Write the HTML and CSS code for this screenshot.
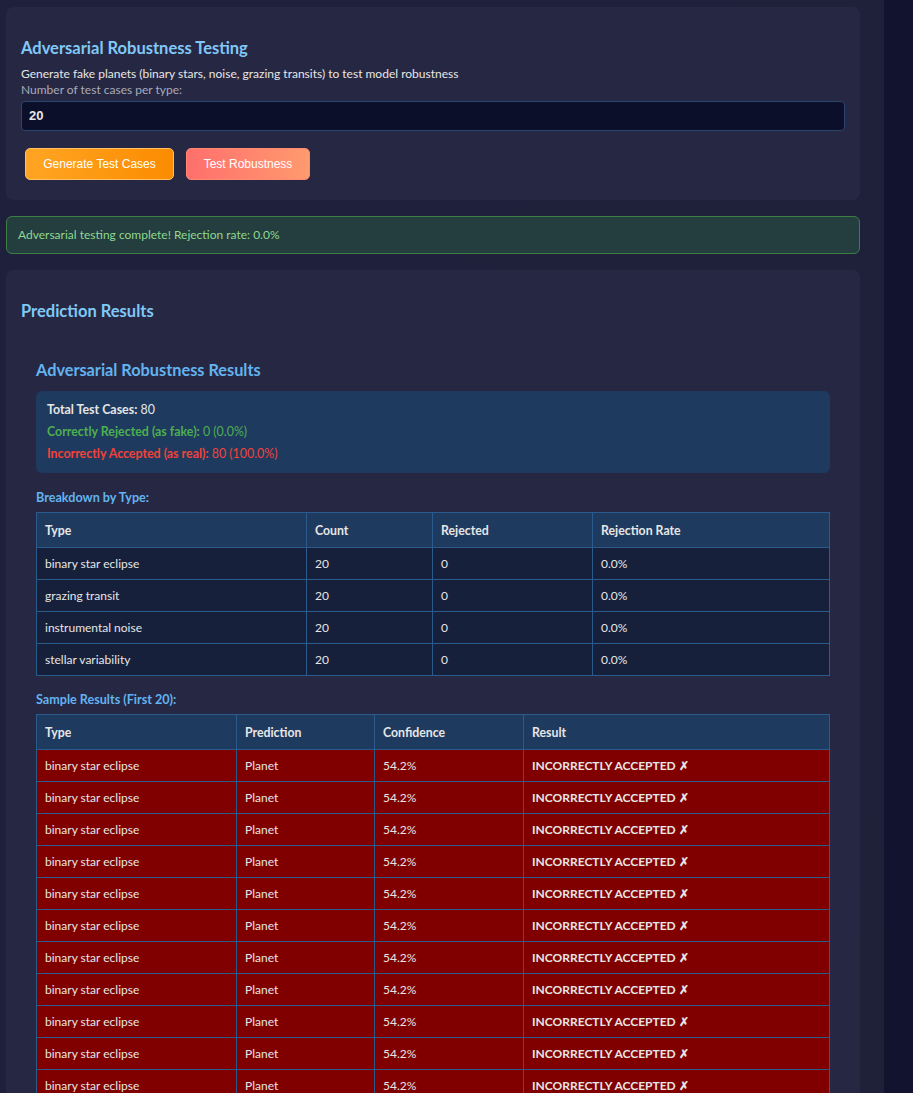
FILE: index.html
```html
<!DOCTYPE html>
<html>
<head>
<meta charset="utf-8">
<link rel="stylesheet" href="styles.css">
</head>
<body>
<div class="layout">
  <main class="main">
    <section class="card">
      <h3 class="card-title">Adversarial Robustness Testing</h3>
      <p class="desc">Generate fake planets (binary stars, noise, grazing transits) to test model robustness</p>
      <label class="label">Number of test cases per type:</label>
      <div class="input">20</div>
      <div class="actions">
        <button class="btn btn-orange">Generate Test Cases</button>
        <button class="btn btn-salmon">Test Robustness</button>
      </div>
    </section>

    <div class="alert">Adversarial testing complete! Rejection rate: 0.0%</div>

    <section class="card card-results">
      <h3 class="card-title">Prediction Results</h3>
      <div class="results">
        <h4 class="results-title">Adversarial Robustness Results</h4>
        <div class="summary">
          <p class="sum-line"><strong>Total Test Cases:</strong> 80</p>
          <p class="sum-line good"><strong>Correctly Rejected (as fake):</strong> 0 (0.0%)</p>
          <p class="sum-line bad"><strong>Incorrectly Accepted (as real):</strong> 80 (100.0%)</p>
        </div>

        <h5 class="sub-title">Breakdown by Type:</h5>
        <table class="tbl tbl-breakdown">
          <thead>
            <tr><th class="c1">Type</th><th class="c2">Count</th><th class="c3">Rejected</th><th>Rejection Rate</th></tr>
          </thead>
          <tbody>
            <tr><td>binary star eclipse</td><td>20</td><td>0</td><td>0.0%</td></tr>
            <tr><td>grazing transit</td><td>20</td><td>0</td><td>0.0%</td></tr>
            <tr><td>instrumental noise</td><td>20</td><td>0</td><td>0.0%</td></tr>
            <tr><td>stellar variability</td><td>20</td><td>0</td><td>0.0%</td></tr>
          </tbody>
        </table>

        <h5 class="sub-title sub-title-samples">Sample Results (First 20):</h5>
        <table class="tbl tbl-samples">
          <thead>
            <tr><th class="s1">Type</th><th class="s2">Prediction</th><th class="s3">Confidence</th><th>Result</th></tr>
          </thead>
          <tbody>
            <tr class="fail"><td>binary star eclipse</td><td>Planet</td><td>54.2%</td><td class="res">INCORRECTLY ACCEPTED ✗</td></tr>
            <tr class="fail"><td>binary star eclipse</td><td>Planet</td><td>54.2%</td><td class="res">INCORRECTLY ACCEPTED ✗</td></tr>
            <tr class="fail"><td>binary star eclipse</td><td>Planet</td><td>54.2%</td><td class="res">INCORRECTLY ACCEPTED ✗</td></tr>
            <tr class="fail"><td>binary star eclipse</td><td>Planet</td><td>54.2%</td><td class="res">INCORRECTLY ACCEPTED ✗</td></tr>
            <tr class="fail"><td>binary star eclipse</td><td>Planet</td><td>54.2%</td><td class="res">INCORRECTLY ACCEPTED ✗</td></tr>
            <tr class="fail"><td>binary star eclipse</td><td>Planet</td><td>54.2%</td><td class="res">INCORRECTLY ACCEPTED ✗</td></tr>
            <tr class="fail"><td>binary star eclipse</td><td>Planet</td><td>54.2%</td><td class="res">INCORRECTLY ACCEPTED ✗</td></tr>
            <tr class="fail"><td>binary star eclipse</td><td>Planet</td><td>54.2%</td><td class="res">INCORRECTLY ACCEPTED ✗</td></tr>
            <tr class="fail"><td>binary star eclipse</td><td>Planet</td><td>54.2%</td><td class="res">INCORRECTLY ACCEPTED ✗</td></tr>
            <tr class="fail"><td>binary star eclipse</td><td>Planet</td><td>54.2%</td><td class="res">INCORRECTLY ACCEPTED ✗</td></tr>
            <tr class="fail"><td>binary star eclipse</td><td>Planet</td><td>54.2%</td><td class="res">INCORRECTLY ACCEPTED ✗</td></tr>
            <tr class="fail"><td>binary star eclipse</td><td>Planet</td><td>54.2%</td><td class="res">INCORRECTLY ACCEPTED ✗</td></tr>
          </tbody>
        </table>
      </div>
    </section>
  </main>
  <aside class="side"></aside>
</div>
</body>
</html>
```

FILE: styles.css
```css
html, body {
  margin: 0;
  padding: 0;
  height: 100%;
  overflow: hidden;
}
body {
  background: #1e1f3b;
  font-family: Lato, "Noto Sans", sans-serif;
  color: #e0e0e0;
  font-size: 12px;
}
.layout {
  display: flex;
  height: 1093px;
  overflow: hidden;
}
.main {
  width: 854px;
  flex: none;
  padding: 7px 24px 0 6px;
  background: linear-gradient(135deg, #1f203c 0%, #1f2139 100%);
}
.side {
  flex: 1;
  background: #12142f;
}
.card {
  background: linear-gradient(135deg, #262843 0%, #262742 100%);
  border-radius: 8px;
  padding: 20px 15px 20px;
}
.card-title {
  margin: 10px 0 0;
  font-size: 16.5px;
  line-height: 22px;
  font-weight: 700;
  color: #81c8f8;
}
.desc {
  margin: 7px 0 0;
  line-height: 16px;
  color: #e6e6e6;
}
.label {
  display: block;
  margin: 0;
  line-height: 16px;
  color: #a9abb8;
}
.input {
  margin-top: 3px;
  height: 28px;
  line-height: 28px;
  padding: 0 7px;
  background: #0b0f2a;
  border: 1px solid #2a456e;
  border-radius: 4px;
  font-family: "Liberation Sans", Arial, sans-serif;
  font-size: 13px;
  font-weight: 700;
  color: #e8e8e8;
}
.actions {
  display: flex;
  gap: 12px;
  margin-top: 17px;
  padding-left: 4px;
}
.btn {
  height: 32px;
  padding: 0;
  white-space: nowrap;
  border-radius: 5px;
  font-family: "Liberation Sans", Arial, sans-serif;
  font-size: 12px;
  color: #fff;
  cursor: pointer;
}
.btn-orange {
  width: 149px;
  background: linear-gradient(90deg, #ffa523 0%, #fb8c00 100%);
  border: 1px solid #ffc163;
}
.btn-salmon {
  width: 124px;
  background: linear-gradient(90deg, #ff6f6d 0%, #ff9a6e 100%);
  border: 1px solid #ff8a70;
}
.alert {
  margin-top: 16px;
  height: 36px;
  line-height: 36px;
  padding: 0 11px;
  background: #243d3f;
  border: 1px solid #3c7f45;
  border-radius: 6px;
  color: #8ed98e;
}
.card-results {
  margin-top: 16px;
  padding-top: 20px;
  padding-bottom: 40px;
}
.results {
  padding: 0 15px;
  margin-top: 37px;
}
.results-title {
  margin: 0;
  font-size: 16.3px;
  line-height: 22px;
  font-weight: 700;
  color: #63b3f0;
}
.summary {
  margin-top: 10px;
  background: #1f3a5f;
  border-radius: 6px;
  padding: 8px 11px 8px;
}
.sum-line {
  margin: 0;
  line-height: 22px;
  color: #e6e6e6;
  font-size: 12.4px;
}
.sum-line strong {
  font-weight: 700;
}
.sum-line.good { color: #4caf50; }
.sum-line.bad { color: #f0433a; }
.sub-title {
  margin: 17px 0 0;
  font-size: 12.6px;
  line-height: 16px;
  font-weight: 700;
  color: #63b3f0;
}
.sub-title-samples {
  margin-top: 16px;
}
.tbl {
  margin-top: 6px;
  width: 100%;
  border-collapse: collapse;
  table-layout: fixed;
}
.tbl th, .tbl td {
  box-sizing: border-box;
  border: 1px solid #2b5a8d;
  padding: 0 8px;
  text-align: left;
  color: #e6e6e6;
}
.tbl th {
  height: 35px;
  background: #1f3a5f;
  font-weight: 700;
  font-size: 12.3px;
}
.tbl td {
  height: 32px;
  background: #17203b;
}
.tbl tr.fail td {
  background: #800000;
}
.tbl td.res {
  font-weight: 700;
}
.c1 { width: 270px; }
.c2 { width: 126px; }
.c3 { width: 160px; }
.s1 { width: 200px; }
.s2 { width: 138px; }
.s3 { width: 149px; }
```
